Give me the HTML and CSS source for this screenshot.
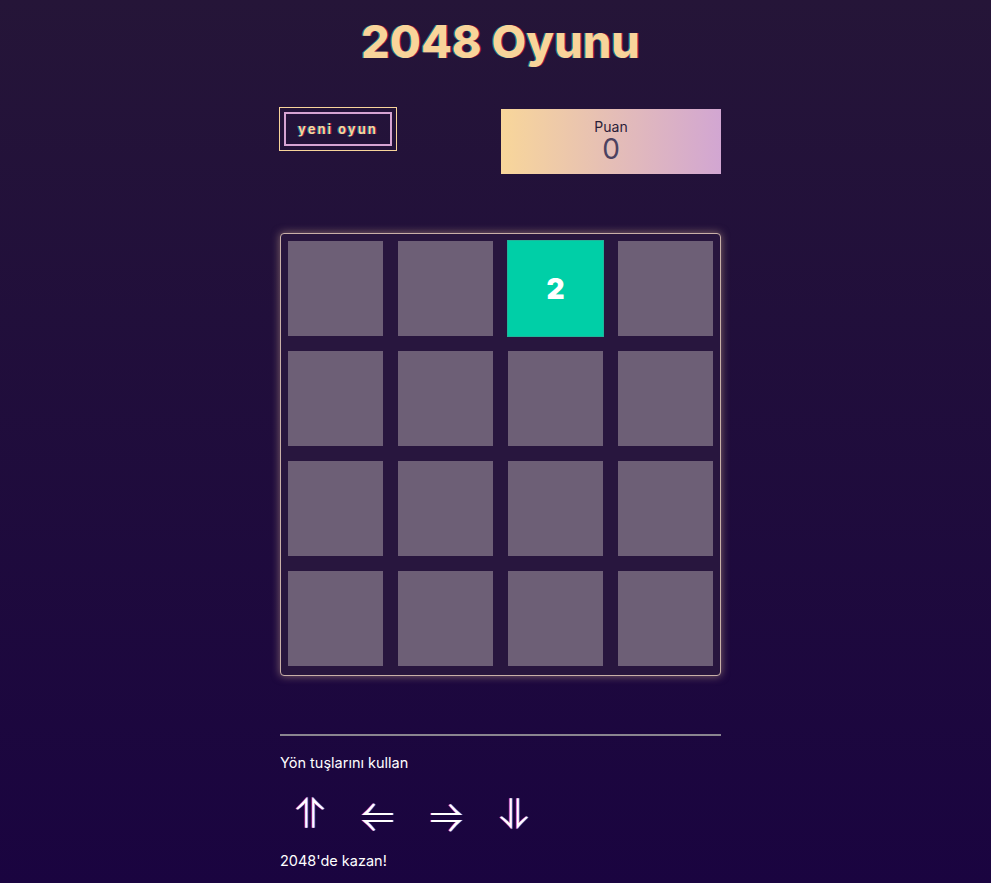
FILE: index.html
```html
<!DOCTYPE html>
<html lang="tr">
<head>
<meta charset="utf-8">
<title>2048 Oyunu</title>
<link rel="stylesheet" href="styles.css">
</head>
<body>
<main class="game">
  <h1 class="title">2048 Oyunu</h1>
  <div class="top-bar">
    <button class="new-game">yeni oyun</button>
    <div class="score">
      <span class="score-label">Puan</span>
      <span class="score-value">0</span>
    </div>
  </div>
  <div class="board">
    <div class="tile"></div>
    <div class="tile"></div>
    <div class="tile tile-2">2</div>
    <div class="tile"></div>
    <div class="tile"></div>
    <div class="tile"></div>
    <div class="tile"></div>
    <div class="tile"></div>
    <div class="tile"></div>
    <div class="tile"></div>
    <div class="tile"></div>
    <div class="tile"></div>
    <div class="tile"></div>
    <div class="tile"></div>
    <div class="tile"></div>
    <div class="tile"></div>
  </div>
  <hr class="divider">
  <p class="hint">Yön tuşlarını kullan</p>
  <div class="arrows">
    <span class="arrow">⥣</span>
    <span class="arrow">⥢</span>
    <span class="arrow">⥤</span>
    <span class="arrow">⥥</span>
  </div>
  <p class="hint">2048'de kazan!</p>
</main>
</body>
</html>
```
FILE: styles.css
```css
html {
  background: linear-gradient(to bottom, #251538 0%, #1a0440 100%);
  min-height: 100%;
}
body {
  margin: 0;
  padding-left: 10px;
  font-family: Inter, "Noto Sans", sans-serif;
  color: #ffffff;
}
.game {
  width: 441px;
  margin: 0 auto;
  padding-top: 14px;
}
.title {
  margin: 0;
  text-align: center;
  font-size: 45px;
  font-weight: 800;
  line-height: 56px;
  color: #f8d49a;
  text-shadow: -1px 0 0 rgba(0, 190, 200, 0.6), 1px 0 0 rgba(230, 30, 80, 0.6);
}
.top-bar {
  display: flex;
  justify-content: space-between;
  align-items: flex-start;
  margin-top: 38px;
}
.new-game {
  margin: 4px 0 0 4px;
  width: 108px;
  height: 34px;
  background: transparent;
  border: 2px solid #d6a3d2;
  outline: 1px solid #f8d49a;
  outline-offset: 4px;
  font-family: Inter, "Noto Sans", sans-serif;
  font-size: 13px;
  font-weight: 700;
  letter-spacing: 2px;
  color: #f8d49a;
  text-shadow: -1px 0 0 rgba(0, 170, 220, 0.6), 1px 0 0 rgba(230, 40, 90, 0.6);
  padding: 0;
}
.score {
  width: 220px;
  height: 65px;
  margin-top: 1px;
  background: linear-gradient(to right, #f8d69a, #d2a6d2);
  display: flex;
  flex-direction: column;
  align-items: center;
  padding-top: 10px;
  box-sizing: border-box;
}
.score-label {
  font-size: 14px;
  line-height: 16px;
  color: #2a2038;
}
.score-value {
  font-size: 28px;
  line-height: 28px;
  color: #4b4260;
}
.board {
  margin-top: 59px;
  box-sizing: border-box;
  width: 441px;
  height: 443px;
  padding: 7px;
  display: grid;
  grid-template-columns: repeat(4, 95px);
  grid-template-rows: repeat(4, 95px);
  gap: 15px;
  background: #28163e;
  border: 1px solid #c9b0a8;
  border-radius: 4px;
  box-shadow: 0 0 8px rgba(240, 200, 160, 0.5);
}
.tile {
  background: #6d5f76;
}
.tile-2 {
  background: #00cfa7;
  border: 1px solid #1fb59a;
  margin: -1px;
  color: #ffffff;
  font-size: 28px;
  font-weight: 900;
  display: flex;
  align-items: center;
  justify-content: center;
}
.divider {
  margin: 58px 0 0;
  border: 0;
  height: 2px;
  background: #8a8590;
}
.hint {
  margin: 18px 0 0;
  font-size: 14.5px;
  line-height: 18px;
  color: #ffffff;
}
.arrows {
  display: flex;
  gap: 36px;
  margin: 14px 0 0 15px;
}
.arrow {
  font-family: "DejaVu Sans", sans-serif;
  font-size: 41px;
  line-height: 56px;
  color: #ffffff;
  text-shadow: -1px 0 0 rgba(230, 30, 80, 0.9), 1px 0 0 rgba(40, 120, 255, 0.9);
}
.arrows + .hint {
  margin-top: 10px;
}
```
